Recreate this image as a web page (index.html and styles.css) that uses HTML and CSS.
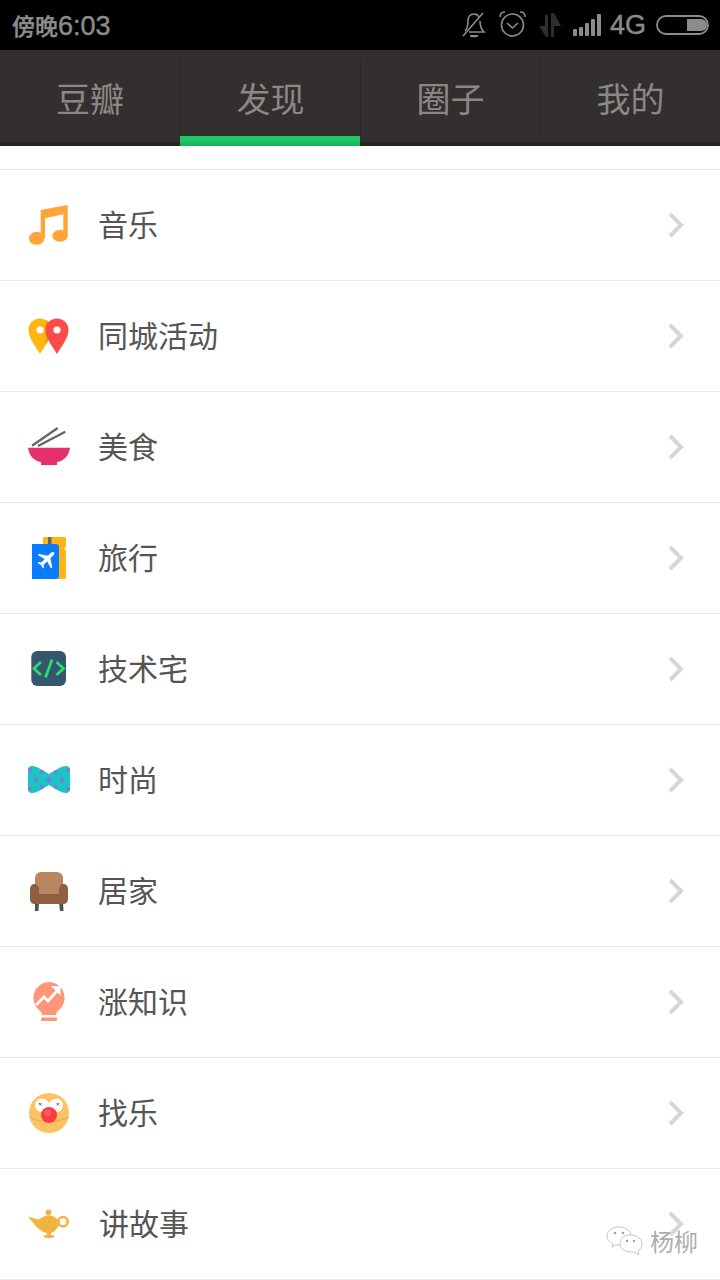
FILE: index.html
```html
<!DOCTYPE html>
<html lang="zh">
<head>
<meta charset="utf-8">
<title>发现</title>
<link rel="stylesheet" href="styles.css">
</head>
<body>
<div class="status">
  <div class="clock"><span class="clock-cjk">傍晚</span>6:03</div>
  <div class="status-icons">
    <svg class="si w-bell" viewBox="458 0 36 50"><g fill="none" stroke="#8c8c8c" stroke-width="1.6"><path d="M463 36 483 13"/><path d="M465 31c3-3 3-6 3-10 0-5 3-7 6-7 2 0 4 1 5 3M480 21c0 5 1 8 4 11H469"/></g><path d="M470 35h8v1.5c-1 1-7 1-8 0z" fill="#8c8c8c"/></svg>
    <svg class="si w-alarm" viewBox="494 0 38 50"><g fill="none" stroke="#8c8c8c" stroke-width="1.6"><circle cx="512.500" cy="25" r="11"/><path d="M507 23l5.500 5 5.500-5"/><path d="M500 17c0-3 2-5 5-5M525 17c0-3-2-5-5-5"/></g></svg>
    <svg class="si w-arrows" viewBox="532 0 35 50"><path d="M539 26h6v-11h3v22h-2z" fill="#2e2e2e"/><path d="M551 13h3l7 13h-7v11h-3z" fill="#2e2e2e"/></svg>
    <svg class="si w-signal" viewBox="567 0 39 50"><g fill="#8c8c8c"><rect x="573" y="29" width="4" height="7" rx="1"/><rect x="579" y="27" width="4" height="9" rx="1"/><rect x="585" y="23" width="4" height="13" rx="1"/><rect x="591" y="19" width="4" height="17" rx="1"/><rect x="597" y="14" width="4" height="22" rx="1"/></g></svg>
    <span class="net">4G</span>
    <svg class="si w-batt" viewBox="650 0 70 50"><rect x="657" y="16" width="51" height="18" rx="9" fill="none" stroke="#8c8c8c" stroke-width="1.800"/><path d="M687 19h14a6 6 0 0 1 0 12h-14z" fill="#8c8c8c"/></svg>
  </div>
</div>

<nav class="tabs">
  <div class="tab">豆瓣</div>
  <div class="tab tab-active">发现</div>
  <div class="tab">圈子</div>
  <div class="tab">我的</div>
</nav>

<main class="list">
  <div class="row">
    <svg class="ico" viewBox="0 0 48 48"><g fill="#ffa436"><ellipse cx="11.700" cy="37.300" rx="7.700" ry="6.500"/><ellipse cx="35" cy="34.700" rx="7.700" ry="6"/><path d="M15.700 37V9L42.700 4v31h-4.400V13.300L20 17.300V37z"/></g></svg>
    <span class="label">音乐</span>
    <svg class="chev" viewBox="0 0 18 26"><path d="M3 2l11 11L3 24"/></svg>
  </div>
  <div class="row">
    <svg class="ico" viewBox="0 0 48 48"><path d="M15 6.500c6.500 0 11.500 5 11.500 11.500C26.500 26 19 35 15 42 11 35 3.500 26 3.500 18 3.500 11.500 8.500 6.500 15 6.500z" fill="#ffb612"/><path d="M21 8C24.500 10.500 26.500 14 26.500 18c0 5-3 9.500-5.500 14.500C20 28 20 12 21 8z" fill="#e8a313"/><circle cx="15" cy="18" r="3.600" fill="#fff"/><path d="M32 6.500c6.500 0 11.500 5 11.500 11.500C43.500 26 36 35 32 42 28 35 20.500 26 20.500 18 20.500 11.500 25.500 6.500 32 6.500z" fill="#fb4a48"/><circle cx="32" cy="18" r="3.600" fill="#fff"/></svg>
    <span class="label">同城活动</span>
    <svg class="chev" viewBox="0 0 18 26"><path d="M3 2l11 11L3 24"/></svg>
  </div>
  <div class="row">
    <svg class="ico" viewBox="0 0 48 48"><path d="M7 22.700 32.700 5M13 23l27.300-14.300" stroke="#666" stroke-width="2.400" fill="none"/><path d="M3 24.700h42c-1 8-6 13-13 14.300V42H16v-3C9 37.700 4 32.700 3 24.700z" fill="#e5306b"/></svg>
    <span class="label">美食</span>
    <svg class="chev" viewBox="0 0 18 26"><path d="M3 2l11 11L3 24"/></svg>
  </div>
  <div class="row">
    <svg class="ico" viewBox="0 0 48 48"><rect x="18" y="3" width="23" height="42" rx="1.500" fill="#ffb612"/><rect x="23" y="3" width="3.500" height="8" fill="#666"/><circle cx="41" cy="14.500" r="1.500" fill="#fff"/><path d="M7 10h24a3 3 0 0 1 3 3v29a3 3 0 0 1-3 3H7z" fill="#0a7cff"/><path d="M29 18.500c-.8-.8-2.300-.6-3.100.2l-3 3-9-1.800-1.200 1.200 7 3.800-3.400 3.600-2.800-.4-1 1 3.500 2 2 3.500 1-1-.4-2.800 3.600-3.400 3.800 7 1.200-1.200-1.800-9 3-3c.8-.8 1.400-2.700.6-3.500z" fill="#fff"/></svg>
    <span class="label">旅行</span>
    <svg class="chev" viewBox="0 0 18 26"><path d="M3 2l11 11L3 24"/></svg>
  </div>
  <div class="row">
    <svg class="ico" viewBox="0 0 48 48"><rect x="6.300" y="6" width="34.700" height="35" rx="6" fill="#34566f"/><path d="M16 17l-7 6.500 7 6.500M31.500 17l7 6.500-7 6.500M27 14.500l-6.500 18" fill="none" stroke="#2cdc6c" stroke-width="2.800"/></svg>
    <span class="label">技术宅</span>
    <svg class="chev" viewBox="0 0 18 26"><path d="M3 2l11 11L3 24"/></svg>
  </div>
  <div class="row">
    <svg class="ico" viewBox="0 0 48 48"><path d="M7 10c5 0 12 5 17 8 5-3 12-8 17-8 3 0 4 2 4 4v19c0 2-1 4-4 4-5 0-12-5-17-8-5 3-12 8-17 8-3 0-4-2-4-4V14c0-2 1-4 4-4z" fill="#1cc5c0"/><g fill="#7f78e8"><circle cx="11" cy="23.500" r="2.300"/><circle cx="24" cy="23.500" r="2.700"/><circle cx="37" cy="23.500" r="2.300"/><circle cx="5" cy="14" r="2.100"/><circle cx="5" cy="33" r="2.100"/><circle cx="17" cy="16" r="2.100"/><circle cx="17" cy="31" r="2.100"/><circle cx="31" cy="16" r="2.100"/><circle cx="31" cy="31" r="2.100"/><circle cx="43" cy="14" r="2.100"/><circle cx="43" cy="33" r="2.100"/></g></svg>
    <span class="label">时尚</span>
    <svg class="chev" viewBox="0 0 18 26"><path d="M3 2l11 11L3 24"/></svg>
  </div>
  <div class="row">
    <svg class="ico" viewBox="0 0 48 48"><path d="M10 35h4l-.5 9h-3.500zM34 35h4l.5 9H35z" fill="#50504f"/><rect x="10" y="5" width="28" height="28" rx="6" fill="#b98662"/><path d="M5 22c0-3 2-5 4-5s5 2 5 5v5h20v-5c0-3 3-5 5-5s4 2 4 5v10c0 3-2 5-5 5H10c-3 0-5-2-5-5z" fill="#8f5f44"/></svg>
    <span class="label">居家</span>
    <svg class="chev" viewBox="0 0 18 26"><path d="M3 2l11 11L3 24"/></svg>
  </div>
  <div class="row">
    <svg class="ico" viewBox="0 0 48 48"><path d="M24 4a16 16 0 0 1 9 29c-1 1-2 2-2 4H17c0-2-1-3-2-4A16 16 0 0 1 24 4z" fill="#ff9678"/><rect x="16" y="39.500" width="16" height="3.500" rx="1" fill="#ff9678"/><path d="M11 27l8-8 4 4 9-10" fill="none" stroke="#fff" stroke-width="2.800"/><path d="M26 8h9.500v9.500z" fill="#fff"/></svg>
    <span class="label">涨知识</span>
    <svg class="chev" viewBox="0 0 18 26"><path d="M3 2l11 11L3 24"/></svg>
  </div>
  <div class="row">
    <svg class="ico" viewBox="0 0 48 48"><circle cx="24" cy="24" r="20" fill="#fdc264"/><path d="M4.500 28c9 6 30 6 39 0" fill="none" stroke="#e2a850" stroke-width="1"/><path d="M24 14c-2-4-7-5-10-4-5 2-5 9-1 12 3 2 8 1 11-2 3 3 8 4 11 2 4-3 4-10-1-12-3-1-8 0-10 4z" fill="#fff"/><path d="M14 14l2.500 2.500M16.500 14 14 16.500M31.500 14l2.500 2.500M34 14l-2.500 2.500" stroke="#666" stroke-width="1"/><circle cx="24" cy="26" r="8" fill="#fb3c40"/><circle cx="22.500" cy="24" r="3.500" fill="#fd5a5c"/></svg>
    <span class="label">找乐</span>
    <svg class="chev" viewBox="0 0 18 26"><path d="M3 2l11 11L3 24"/></svg>
  </div>
  <div class="row">
    <svg class="ico" viewBox="0 0 48 48"><circle cx="23.500" cy="12.500" r="3" fill="#f2b441"/><circle cx="38" cy="21.700" r="4.700" fill="none" stroke="#f2b441" stroke-width="2.600"/><path d="M3 17c5 .5 8 2 11 2.500 3-2.500 6-4 10-4 5 0 8.500 3 10.500 7-1 5-4 9-8.500 10.500v2c2 0 3.500 1 3.500 1.500 0 1-3.500 1.500-5.500 1.500s-5.500-.5-5.500-1.500c0-.5 1.500-1.500 3.500-1.500v-2C14 32 10 24 3 17z" fill="#f2b441"/></svg>
    <span class="label label-wide">讲故事</span>
    <svg class="chev" viewBox="0 0 18 26"><path d="M3 2l11 11L3 24"/></svg>
  </div>
</main>

<div class="watermark">
  <svg class="wm-icon" viewBox="0 0 38 30"><g fill="#fff" stroke="#c4c4c4" stroke-width="1"><path d="M13 1c7 0 12 4 12 9s-5 9-12 9l-4 0-3 2 1-3C3 16 1 13 1 10 1 5 6 1 13 1z"/><path d="M24 9c7 0 12 4 12 9 0 3-2 5-4 7l1 4-5-3c-7 1-14-3-14-8 0-5 4-9 10-9z"/></g><g fill="#a0a0a0"><circle cx="9" cy="7" r="1.300"/><circle cx="17" cy="7" r="1.300"/><circle cx="21" cy="15" r="1.200"/><circle cx="28" cy="15" r="1.200"/></g></svg>
  <span class="wm-text">杨柳</span>
</div>
</body>
</html>
```
FILE: styles.css
```css
* { box-sizing: border-box; }
html, body { margin: 0; padding: 0; background: #fff; }
body {
  position: relative;
  width: 720px;
  height: 1280px;
  overflow: hidden;
  font-family: "Liberation Sans", "Noto Sans CJK SC", sans-serif;
}
.status {
  height: 50px;
  background: #000;
  display: flex;
  align-items: center;
  justify-content: space-between;
  padding-left: 12px;
}
.clock {
  color: #8c8c8c;
  font-size: 27px;
  line-height: 50px;
  -webkit-text-stroke: 0.4px #8c8c8c;
}
.clock-cjk { font-size: 23px; font-family: "Noto Sans CJK SC", sans-serif; font-weight: 500; }
.status-icons { display: flex; align-items: center; height: 50px; }
.si { display: block; height: 50px; }
.w-bell { width: 36px; }
.w-alarm { width: 38px; }
.w-arrows { width: 35px; }
.w-signal { width: 39px; }
.w-batt { width: 70px; }
.net { width: 44px; padding-left: 4px; color: #8c8c8c; font-size: 27px; line-height: 50px; -webkit-text-stroke: 0.4px #8c8c8c; }

.tabs {
  display: grid;
  grid-template-columns: repeat(4, 180px);
  height: 96px;
  background: #322f2e;
  border-bottom: 4px solid #262322;
}
.tab {
  position: relative;
  height: 76px;
  margin-top: 10px;
  padding-bottom: 2px;
  display: flex;
  align-items: center;
  justify-content: center;
  font-family: "Noto Sans CJK SC", sans-serif;
  font-size: 34px;
  color: #8a8886;
  border-left: 1px solid #2a2726;
}
.tab:first-child { border-left: 0; }
.tab-active::after {
  content: "";
  position: absolute;
  left: -1px;
  right: 0;
  top: 76px;
  height: 6px;
  background: #1cc863;
  border-bottom: 4px solid #19b85a;
}

.list {
  margin-top: 23px;
  border-top: 1px solid #ececec;
}
.row {
  height: 111px;
  border-bottom: 1px solid #ececec;
  display: flex;
  align-items: center;
  padding-left: 25px;
}
.ico { display: block; width: 48px; height: 48px; flex: none; }
.label {
  margin-left: 25px;
  padding-bottom: 4px;
  font-family: "Noto Sans CJK SC", sans-serif;
  font-size: 30px;
  line-height: 40px;
  color: #555;
  flex: 1;
}
.label-wide { margin-left: 26px; }
.chev { display: block; width: 18px; height: 26px; margin-right: 35px; flex: none; }
.chev path { fill: none; stroke: #d6d6d6; stroke-width: 4; }

.watermark {
  position: absolute;
  left: 606px;
  top: 1225px;
  display: flex;
  align-items: center;
  gap: 6px;
}
.wm-icon { display: block; width: 38px; height: 32px; }
.wm-text {
  font-family: "Noto Sans CJK SC", sans-serif;
  font-size: 24px;
  line-height: 32px;
  color: #adadad;
  text-shadow: 0 0 2px #fff;
}
```
